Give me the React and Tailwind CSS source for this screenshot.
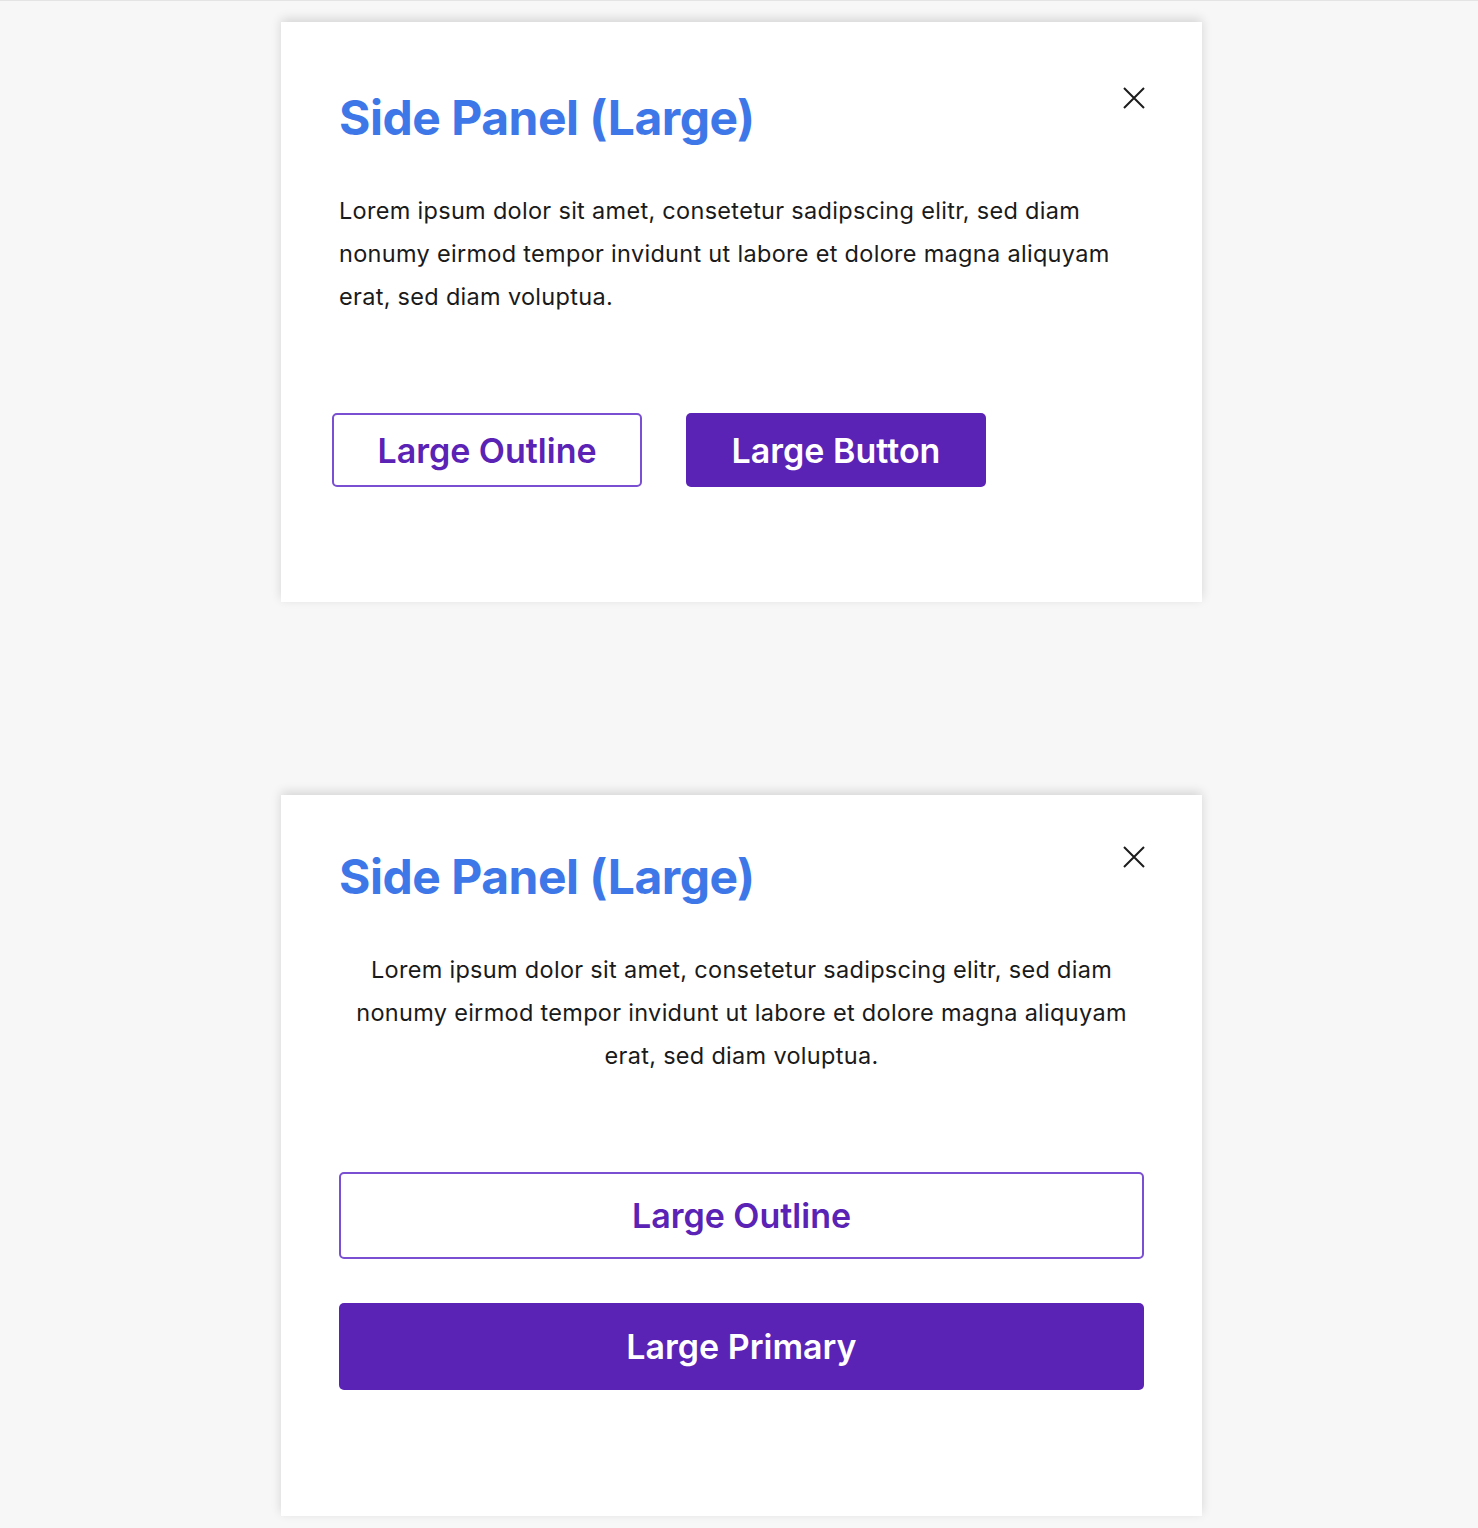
const body =
  'Lorem ipsum dolor sit amet, consetetur sadipscing elitr, sed diam nonumy eirmod tempor invidunt ut labore et dolore magna aliquyam erat, sed diam voluptua.'

function CloseButton() {
  return (
    <button className="mt-[7px] -mr-[1px] w-[22px] h-[22px] text-[#1c1c1c]">
      <svg width="22" height="22" viewBox="0 0 22 22" fill="none" stroke="currentColor" strokeWidth="2">
        <path d="M1 1L21 21M21 1L1 21" />
      </svg>
    </button>
  )
}

function Title() {
  return (
    <h2 className="pt-[10px] text-[48px] leading-[56px] font-bold tracking-[-0.5px] text-[#3e77e7]">
      Side Panel (Large)
    </h2>
  )
}

function InlinePanel() {
  return (
    <section className="w-[921px] bg-white shadow-[0_-3px_10px_rgba(0,0,0,0.14)] px-[58px] pt-[58px] pb-[115px]">
      <div className="flex items-start justify-between">
        <Title />
        <CloseButton />
      </div>
      <p className="mt-[43px] text-[23.5px] leading-[43px] tracking-[0.3px] text-[#1a1a1a]">{body}</p>
      <div className="mt-[95px] flex gap-[44px] -ml-[7px]">
        <button className="w-[310px] h-[74px] rounded-[5px] border-2 border-[#7a4fd2] bg-white text-[34px] font-semibold text-[#5a22b5]">
          Large Outline
        </button>
        <button className="w-[300px] h-[74px] rounded-[5px] bg-[#5a22b5] text-[34px] font-semibold text-white">
          Large Button
        </button>
      </div>
    </section>
  )
}

function StackedPanel() {
  return (
    <section className="w-[921px] bg-white shadow-[0_-3px_10px_rgba(0,0,0,0.14)] px-[58px] pt-[44px] pb-[126px]">
      <div className="flex items-start justify-between">
        <Title />
        <CloseButton />
      </div>
      <p className="mt-[43px] text-[23.5px] leading-[43px] tracking-[0.3px] text-[#1a1a1a] text-center">{body}</p>
      <div className="mt-[95px] flex flex-col gap-[44px]">
        <button className="w-full h-[87px] rounded-[5px] border-2 border-[#7a4fd2] bg-white text-[34px] font-semibold text-[#5a22b5]">
          Large Outline
        </button>
        <button className="w-full h-[87px] rounded-[5px] bg-[#5a22b5] text-[34px] font-semibold text-white">
          Large Primary
        </button>
      </div>
    </section>
  )
}

export default function App() {
  return (
    <div className="min-h-[1528px] bg-[#f7f7f7] border-t border-[#e4e4e4] font-['Inter',sans-serif]">
      <div className="flex flex-col items-start pt-[21px] pl-[281px] gap-[193px]">
        <InlinePanel />
        <StackedPanel />
      </div>
    </div>
  )
}
